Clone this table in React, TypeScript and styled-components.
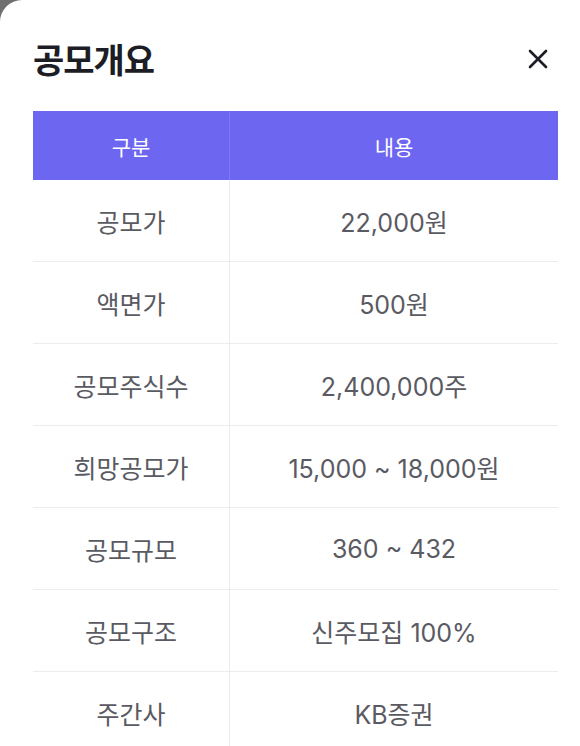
import React from "react";
import styled, { createGlobalStyle } from "styled-components";

const Global = createGlobalStyle`
  html, body { margin: 0; padding: 0; background: #6f6f6f; }
  body { font-family: Inter, "Noto Sans CJK KR", "Noto Sans", sans-serif; }
  * { box-sizing: border-box; }
`;

const Sheet = styled.div`
  width: 580px;
  min-height: 746px;
  background: #ffffff;
  border-top-left-radius: 22px;
  padding: 0 22px 0 33px;
  overflow: hidden;
`;

const Header = styled.div`
  display: flex;
  align-items: center;
  justify-content: space-between;
  height: 111px;
  padding-top: 6px;
`;

const Title = styled.h1`
  margin: 0;
  font-family: "Noto Sans CJK KR", sans-serif;
  font-size: 34px;
  font-weight: 700;
  color: #1d1d26;
  letter-spacing: -1px;
`;

const Close = styled.button`
  border: none;
  background: none;
  padding: 0;
  margin-right: 8px;
  width: 24px;
  height: 24px;
  display: flex;
  align-items: center;
  justify-content: center;
`;

const Table = styled.div`
  width: 525px;
  display: grid;
  grid-template-columns: 197px 1fr;
`;

const HeadCell = styled.div<{ $first?: boolean }>`
  height: 69px;
  background: #6d66f1;
  color: #ffffff;
  font-size: 21px;
  display: flex;
  align-items: center;
  justify-content: center;
  border-right: ${(p) => (p.$first ? "1px solid #7f79f3" : "none")};
`;

const Cell = styled.div<{ $first?: boolean; $last?: boolean }>`
  height: 82px;
  display: flex;
  align-items: center;
  justify-content: center;
  font-size: 25px;
  font-weight: 400;
  color: #5a5a62;
  border-bottom: ${(p) => (p.$last ? "none" : "1px solid #ececee")};
  border-right: ${(p) => (p.$first ? "1px solid #ececee" : "none")};
`;

const rows: [string, string][] = [
  ["공모가", "22,000원"],
  ["액면가", "500원"],
  ["공모주식수", "2,400,000주"],
  ["희망공모가", "15,000 ~ 18,000원"],
  ["공모규모", "360 ~ 432"],
  ["공모구조", "신주모집 100%"],
  ["주간사", "KB증권"],
];

export default function App() {
  return (
    <>
      <Global />
      <Sheet>
        <Header>
          <Title>공모개요</Title>
          <Close aria-label="닫기">
            <svg width="22" height="22" viewBox="0 0 22 22">
              <path d="M3 3 L19 19 M19 3 L3 19" stroke="#1d1d26" strokeWidth="2.6" strokeLinecap="round" />
            </svg>
          </Close>
        </Header>
        <Table>
          <HeadCell $first>구분</HeadCell>
          <HeadCell>내용</HeadCell>
          {rows.map(([k, v], i) => (
            <React.Fragment key={k}>
              <Cell $first $last={i === rows.length - 1}>{k}</Cell>
              <Cell $last={i === rows.length - 1}>{v}</Cell>
            </React.Fragment>
          ))}
        </Table>
      </Sheet>
    </>
  );
}
